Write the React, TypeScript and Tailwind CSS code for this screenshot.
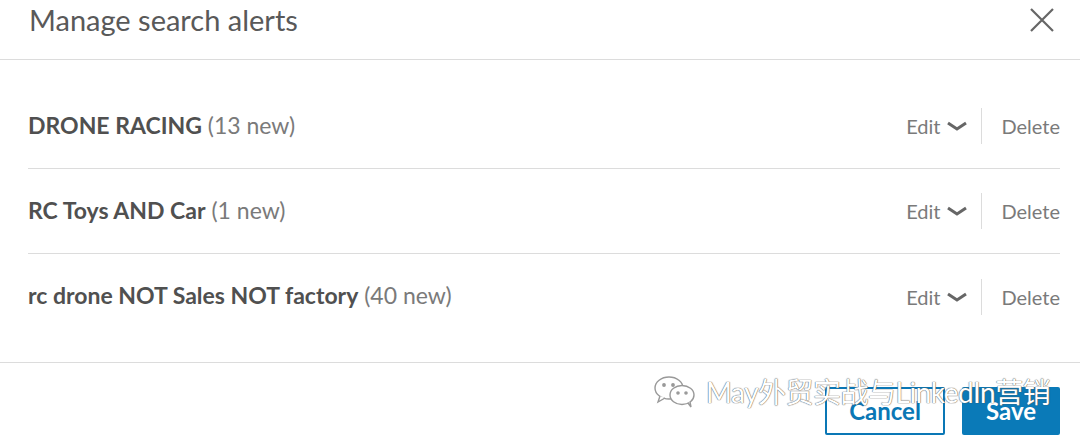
import React from 'react';

const alerts = [
  { name: 'DRONE RACING', count: 13 },
  { name: 'RC Toys AND Car', count: 1 },
  { name: 'rc drone NOT Sales NOT factory', count: 40 },
];

export default function App() {
  return (
    <div
      className="relative w-[1080px] h-[442px] bg-white overflow-hidden text-[#555]"
      style={{ fontFamily: "Lato, 'Noto Sans CJK SC', sans-serif" }}
    >
      {/* HEADER */}
      <header className="h-[60px] flex items-center justify-between pl-[29px] pr-[24px] border-b border-[#dcdcdc]">
        <h1 className="text-[29px] leading-none text-[#595959] -mt-[20px]">Manage search alerts</h1>
        <button className="w-[28px] h-[28px] -mt-[19px] text-[#666]">
          <svg viewBox="0 0 28 28" width="28" height="28" fill="none" stroke="currentColor" strokeWidth="2.2">
            <path d="M3 3 L25 25 M25 3 L3 25" />
          </svg>
        </button>
      </header>

      {/* LIST */}
      <main className="pl-[28px] pr-[20px] pt-[24px] pb-[23px] border-b border-[#dcdcdc]">
        {alerts.map((a, i) => (
          <AlertRow key={a.name} name={a.name} count={a.count} last={i === alerts.length - 1} />
        ))}
      </main>

      {/* FOOTER */}
      <footer className="flex justify-end gap-[17px] pr-[20px] pt-[24px]">
        <button className="w-[120px] h-[48px] border-2 border-[#0a77b5] rounded-[2px] text-[#0a77b5] text-[24px] font-bold">
          Cancel
        </button>
        <button className="w-[98px] h-[48px] bg-[#0a7ab8] rounded-[2px] text-white text-[24px] font-bold">
          Save
        </button>
      </footer>

      {/* watermark */}
      <div className="absolute left-[652px] top-[371px] flex items-center gap-[6px] text-white text-[28px] [text-shadow:0_0_1px_#555,0_0_1px_#555]">
        <svg width="48" height="34" viewBox="0 0 48 34" fill="none" stroke="#999" strokeWidth="1.4">
          <ellipse cx="17" cy="13" rx="14" ry="11" fill="white" />
          <path d="M8 21 L6 27 L13 23" fill="white" />
          <ellipse cx="30" cy="20" rx="12" ry="9.5" fill="white" />
          <path d="M36 28 L39 32 L38 27" fill="white" />
          <circle cx="12" cy="10" r="1.2" fill="#999" />
          <circle cx="21" cy="10" r="1.2" fill="#999" />
          <circle cx="26" cy="18" r="1.1" fill="#999" />
          <circle cx="34" cy="18" r="1.1" fill="#999" />
        </svg>
        <span className="tracking-[-0.5px]">May外贸实战与LinkedIn营销</span>
      </div>
    </div>
  );
}

function AlertRow({ name, count, last }: { name: string; count: number; last: boolean }) {
  return (
    <div className={`flex items-center justify-between h-[85px] ${last ? '' : 'border-b border-[#dcdcdc]'}`}>
      <div className="text-[23px] -mt-[2px]">
        <span className="font-bold text-[#505050]">{name}</span>
        <span className="text-[#7a7a7a]"> ({count} new)</span>
      </div>
      <div className="flex items-center text-[20px] text-[#7a7a7a]">
        <span>Edit</span>
        <svg className="ml-[6px]" width="22" height="10" viewBox="0 0 22 10" fill="none" stroke="#666" strokeWidth="3">
          <path d="M2 2 L11 8 L20 2" />
        </svg>
        <span className="w-px h-[36px] bg-[#dcdcdc] ml-[13px] mr-[19px]" />
        <span>Delete</span>
      </div>
    </div>
  );
}
